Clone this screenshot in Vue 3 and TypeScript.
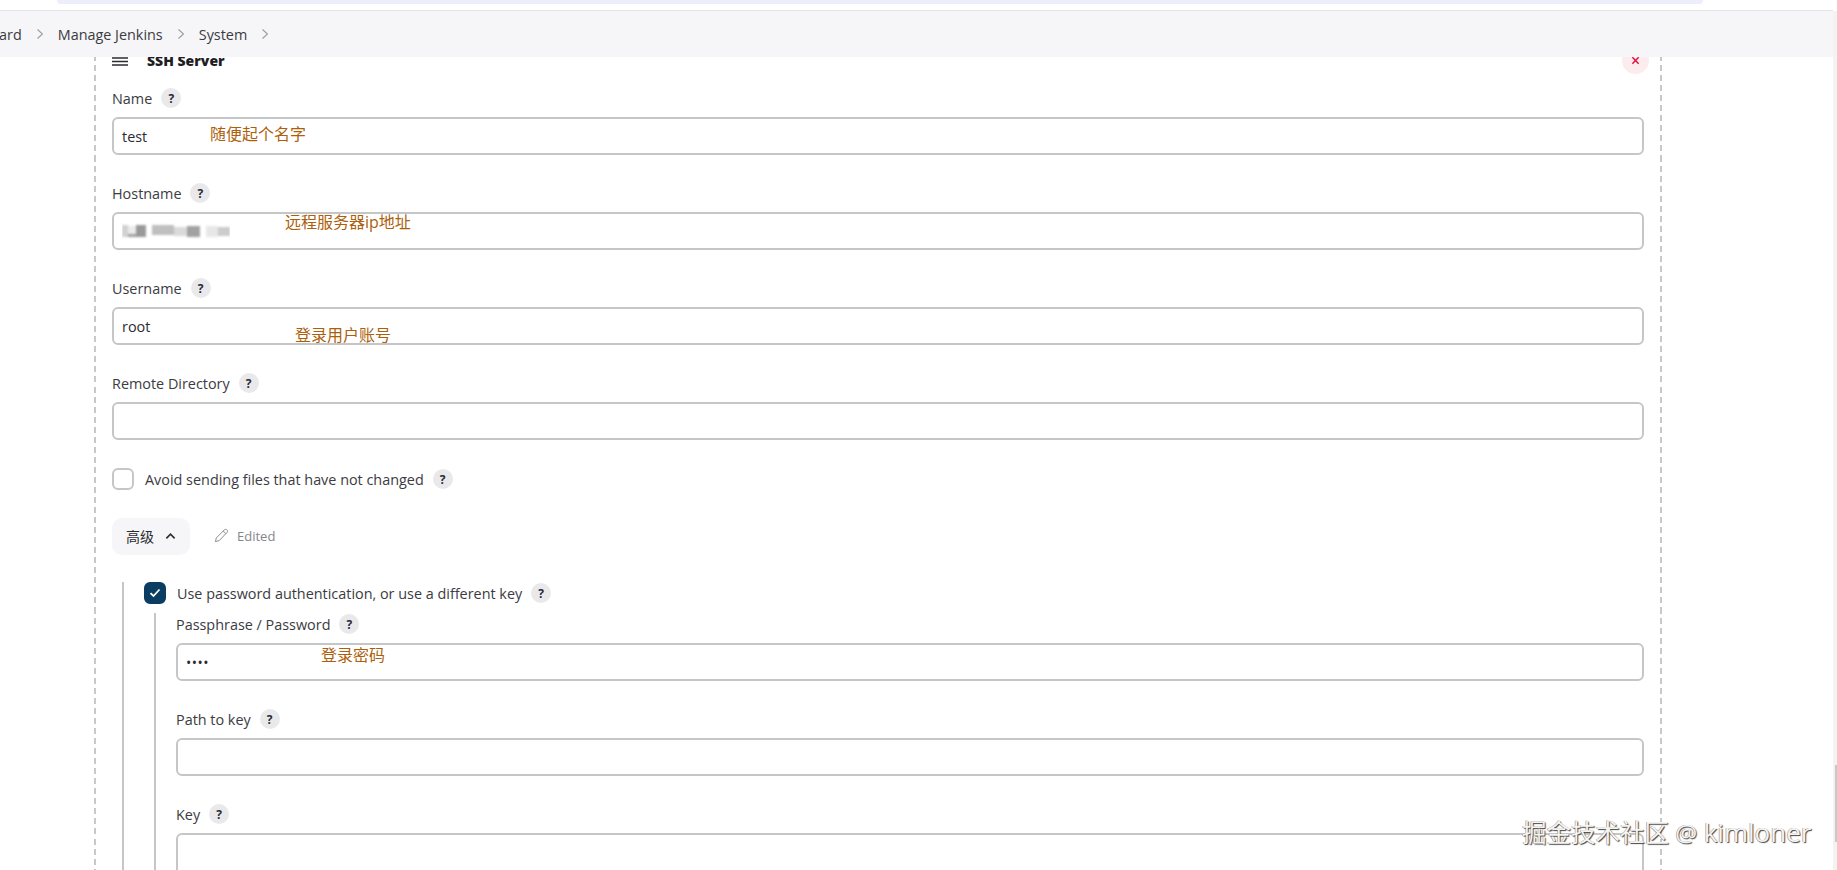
<script setup lang="ts">
interface Field {
  label: string
  value?: string
  note?: string
  noteClass?: string
  blurred?: boolean
}

const topFields: Field[] = [
  { label: 'Name', value: 'test', note: '随便起个名字', noteClass: 'note-name' },
  { label: 'Hostname', blurred: true, note: '远程服务器ip地址', noteClass: 'note-host' },
  { label: 'Username', value: 'root', note: '登录用户账号', noteClass: 'note-user' },
  { label: 'Remote Directory' },
]

const blurBlocks = [
  [0, 4, 6, 12, 0.28], [6, 5, 8, 8, 0.12], [6, 13, 8, 3, 0.55], [14, 4, 10, 12, 0.6],
  [30, 4, 22, 10, 0.38], [52, 6, 13, 9, 0.22], [65, 5, 13, 11, 0.55],
  [84, 5, 12, 11, 0.15], [96, 6, 12, 9, 0.3],
]
</script>

<template>
  <div class="page">
    <div class="strip"><div class="pill"></div></div>
    <nav class="crumbs">
      <span class="crumb-first">ard</span>
      <svg class="chev" viewBox="0 0 6 10"><path d="M.5.5L5.500 5 .5 9.500" /></svg>
      <span>Manage Jenkins</span>
      <svg class="chev" viewBox="0 0 6 10"><path d="M.5.5L5.500 5 .5 9.500" /></svg>
      <span>System</span>
      <svg class="chev" viewBox="0 0 6 10"><path d="M.5.5L5.500 5 .5 9.500" /></svg>
    </nav>

    <main class="card">
      <header class="card-head">
        <svg class="burger" viewBox="0 0 16 9"><path d="M0 1h16M0 4.500h16M0 8h16" /></svg>
        <strong>SSH Server</strong>
        <button class="close" type="button" aria-label="Delete">
          <svg viewBox="0 0 10 10"><path d="M1.500 1.500l7 7M8.500 1.500l-7 7" /></svg>
        </button>
      </header>

      <div v-for="f in topFields" :key="f.label" class="field">
        <div class="label">{{ f.label }}<span class="help">?</span></div>
        <div class="input">
          <span v-if="f.value">{{ f.value }}</span>
          <svg v-if="f.blurred" class="blurred" viewBox="0 0 108 20">
            <defs><filter id="soft"><feGaussianBlur stdDeviation="0.8" /></filter></defs>
            <g filter="url(#soft)">
              <rect v-for="(b, i) in blurBlocks" :key="i" :x="b[0]" :y="b[1]" :width="b[2]" :height="b[3]" fill="#555" :opacity="b[4]" />
            </g>
          </svg>
          <span v-if="f.note" class="note" :class="f.noteClass">{{ f.note }}</span>
        </div>
      </div>

      <div class="check-row avoid">
        <span class="box"></span>
        <span>Avoid sending files that have not changed</span>
        <span class="help">?</span>
      </div>

      <div class="adv-row">
        <button class="adv" type="button">
          高级
          <svg viewBox="0 0 12 8"><path d="M1.500 6.500L6 2l4.500 4.500" /></svg>
        </button>
        <span class="edited">
          <svg viewBox="0 0 16 16"><path d="M1.500 14.500l1-4L11 2c.8-.8 2-.8 2.800 0 .8.8.8 2 0 2.800L5.500 13.500z M9.800 3.200l3 3" /></svg>
          Edited
        </span>
      </div>

      <section class="adv-body">
        <div class="check-row use-pass">
          <span class="box checked">
            <svg viewBox="0 0 12 10"><path d="M1.500 5.200L4.500 8l6-6.500" /></svg>
          </span>
          <span>Use password authentication, or use a different key</span>
          <span class="help">?</span>
        </div>
        <div class="inner">
          <div class="field">
            <div class="label">Passphrase / Password<span class="help">?</span></div>
            <div class="input">
              <span class="dots">••••</span>
              <span class="note note-pass">登录密码</span>
            </div>
          </div>
          <div class="field">
            <div class="label">Path to key<span class="help">?</span></div>
            <div class="input"></div>
          </div>
          <div class="field">
            <div class="label">Key<span class="help">?</span></div>
            <div class="input tall"></div>
          </div>
        </div>
      </section>
    </main>

    <div class="scrollbar"><div class="thumb"></div></div>
    <div class="watermark">掘金技术社区 @ <span class="wm-latin">kimloner</span></div>
  </div>
</template>

<style>
html, body { margin: 0; background: #fff; }
</style>

<style scoped>
.page {
  position: relative;
  width: 1837px;
  height: 870px;
  overflow: hidden;
  background: #fff;
  color: #2b2b33;
  font-family: "Open Sans", "Noto Sans CJK SC", sans-serif;
  font-size: 14.4px;
}
.strip { height: 10px; box-sizing: border-box; padding: 0 134px 0 57px; }
.pill { height: 4px; background: #eceefa; border-radius: 0 0 10px 10px; }
.crumbs {
  position: relative;
  z-index: 2;
  height: 47px;
  box-sizing: border-box;
  border-top: 1px solid #e3e3e5;
  background: #f6f6f8;
  margin-right: 4px;
  display: flex;
  align-items: center;
  color: #3b3b42;
}
.crumb-first { margin-left: -1px; }
.chev { width: 6px; height: 10px; margin: 0 15px; fill: none; stroke: #9a9aa0; stroke-width: 1.100; }
.card {
  margin: -10px 0 0 94px;
  width: 1568px;
  height: 900px;
  box-sizing: border-box;
  padding: 0 16px;
  border-left: 2px dashed #c6c8ca;
  border-right: 2px dashed #c6c8ca;
  border-image: repeating-linear-gradient(to bottom, #c6c8ca 0 6px, transparent 6px 10px) 2;
  border-top: 0;
  border-bottom: 0;
}
.card-head { display: flex; align-items: center; height: 26px; margin-bottom: 14px; position: relative; font-size: 14px; font-weight: 700; color: #1d1d22; }
.burger { width: 16px; height: 9px; margin: 2px 19px 0 0; fill: none; stroke: #2b2b33; stroke-width: 1.400; }
.close {
  position: absolute;
  right: -5px;
  top: 0;
  width: 27px;
  height: 27px;
  padding: 0;
  border: 0;
  border-radius: 50%;
  background: #fcecee;
  display: flex;
  align-items: center;
  justify-content: center;
}
.close svg { width: 9px; height: 9px; fill: none; stroke: #e0103a; stroke-width: 1.600; }
.field { margin-bottom: 27px; }
.label { display: flex; align-items: center; height: 22px; margin-bottom: 8px; color: #3b3b42; }
.help {
  display: inline-flex;
  align-items: center;
  justify-content: center;
  width: 20px;
  height: 20px;
  margin-left: 9px;
  border-radius: 50%;
  background: #e9e9eb;
  color: #2b2b33;
  font-size: 12px;
  font-weight: 700;
}
.input {
  position: relative;
  display: flex;
  align-items: center;
  height: 38px;
  box-sizing: border-box;
  padding: 0 8px;
  border: 2px solid #c4c6c8;
  border-radius: 6px;
  color: #2b2b33;
}
.input.tall { height: 120px; }
.blurred { width: 108px; height: 20px; }
.dots { font-size: 14px; letter-spacing: 0.5px; }
.note { position: absolute; color: #ad5f0c; font-size: 16px; line-height: 23px; white-space: nowrap; }
.note-name { left: 96px; top: 4px; }
.note-host { left: 171px; top: -3px; }
.note-user { left: 181px; top: 15px; }
.note-pass { left: 143px; top: -1px; }
.check-row { display: flex; align-items: center; color: #3b3b42; }
.avoid { height: 22px; margin-top: 28px; }
.box {
  width: 22px;
  height: 22px;
  box-sizing: border-box;
  margin-right: 11px;
  border: 2px solid #c4c6c8;
  border-radius: 6px;
  display: flex;
  align-items: center;
  justify-content: center;
}
.box.checked { background: #0b3d63; border-color: #0b3d63; }
.box.checked svg { width: 12px; height: 10px; fill: none; stroke: #fff; stroke-width: 1.800; }
.adv-row { display: flex; align-items: center; margin-top: 28px; }
.adv {
  display: flex;
  align-items: center;
  gap: 11px;
  height: 37px;
  width: 78px;
  box-sizing: border-box;
  padding: 0 14px 2px;
  border: 0;
  border-radius: 10px;
  background: #f6f6f8;
  color: #2b2b33;
  font: inherit;
  font-size: 14px;
}
.adv svg { width: 11px; height: 8px; fill: none; stroke: #2b2b33; stroke-width: 1.800; }
.edited { display: flex; align-items: center; gap: 8px; margin: -2px 0 0 24px; color: #85858c; font-size: 13px; }
.edited svg { width: 15px; height: 15px; fill: none; stroke: #85858c; stroke-width: 1; }
.adv-body { margin: 27px 0 0 10px; padding-left: 20px; border-left: 2px solid #c4c6c8; }
.use-pass { height: 22px; }
.inner { margin: 9px 0 0 10px; padding-left: 20px; border-left: 2px solid #c4c6c8; }
.scrollbar { position: absolute; top: 11px; right: 0; bottom: 0; width: 4px; background: #f3f3f3; }
.thumb { position: absolute; left: 2px; right: 0; top: 754px; height: 77px; background: #c8c8c8; }
.watermark {
  position: absolute;
  z-index: 3;
  left: 1522px;
  top: 814px;
  color: #f4f4f4;
  font-family: "Open Sans", "Noto Sans CJK SC", sans-serif;
  font-size: 24.5px;
  white-space: nowrap;
  text-shadow: 1px 1px 1px #444, -0.5px -0.5px 0 #888;
}
.wm-latin { font-size: 26px; }
</style>
